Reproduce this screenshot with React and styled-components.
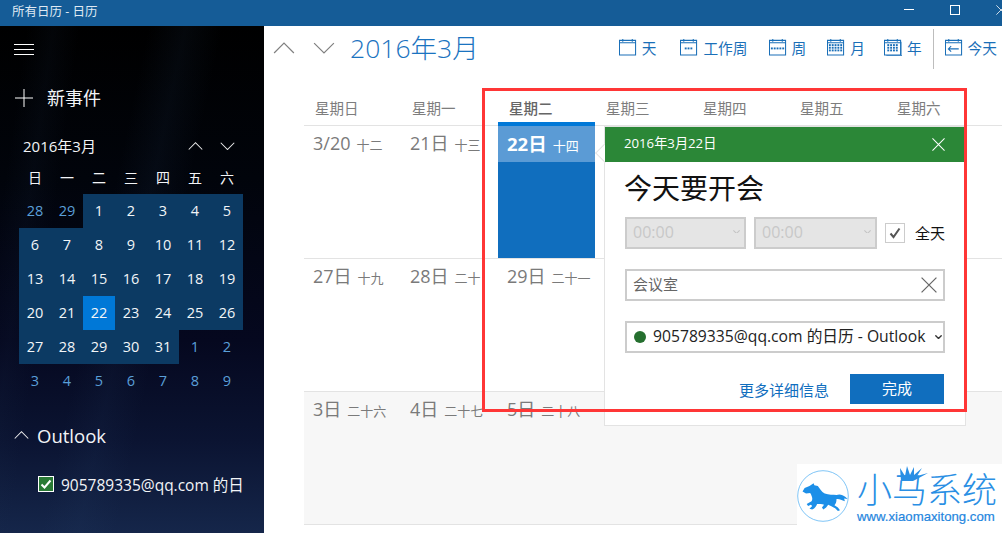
import React from "react";
import styled, { createGlobalStyle } from "styled-components";

const GlobalStyle = createGlobalStyle`
  html, body {
    margin: 0;
    padding: 0;
    background: #fff;
  }
  * {
    box-sizing: border-box;
  }
`;

const FONT = `"Open Sans", "Noto Sans CJK SC", sans-serif`;

const Page = styled.div`
  position: relative;
  width: 1002px;
  height: 533px;
  overflow: hidden;
  font-family: ${FONT};
  background: #fff;
`;

const TitleBar = styled.div`
  height: 26px;
  background: #155c97;
  display: flex;
  align-items: center;
  justify-content: space-between;
  padding: 0 0 6px 12px;
  color: #dfe9f3;
  font-size: 12.5px;
  overflow: hidden;
`;

const WindowButtons = styled.div`
  display: flex;
  align-items: center;
  width: 104px;
  gap: 36px;
  flex: none;
  margin-right: -6px;
  svg {
    flex: none;
    display: block;
  }
`;

const Body = styled.div`
  display: flex;
  height: 507px;
`;

const Sidebar = styled.aside`
  width: 264px;
  flex: none;
  color: #f2f4f7;
  overflow: hidden;
  padding-top: 18px;
  background:
    linear-gradient(102deg, transparent 40%, rgba(40, 70, 110, 0.1) 50%, transparent 60%),
    linear-gradient(98deg, transparent 8%, rgba(30, 50, 80, 0.1) 16%, transparent 24%),
    linear-gradient(180deg, #000 0%, #01040b 30%, #05081f 62%, #0b1432 82%, #15264a 100%);
`;

const MenuButton = styled.div`
  padding-left: 14px;
  height: 20px;
  display: flex;
  flex-direction: column;
  gap: 4px;
  span {
    display: block;
    width: 20px;
    height: 1px;
    background: #fff;
  }
`;

const NewEvent = styled.div`
  display: flex;
  align-items: center;
  gap: 14px;
  margin-top: 20px;
  padding-left: 15px;
  height: 28px;
  font-size: 18px;
  line-height: 28px;
`;

const MonthRow = styled.div`
  display: flex;
  align-items: center;
  justify-content: space-between;
  margin-top: 23px;
  padding: 0 29px 0 23px;
  height: 22px;
  font-size: 15px;
  span {
    margin-top: -2px;
  }
`;

const MonthArrows = styled.div`
  display: flex;
  gap: 17px;
  svg {
    display: block;
  }
`;

const MiniCalendar = styled.div`
  display: grid;
  grid-template-columns: repeat(7, 32px);
  margin: 10px 0 0 19px;
`;

const MiniHead = styled.div`
  height: 27px;
  font-size: 14px;
  line-height: 21px;
  text-align: center;
`;

const MiniDay = styled.div`
  height: 34px;
  line-height: 34px;
  text-align: center;
  font-size: 14.5px;
  color: ${(p) => (p.$inMonth ? "#f2f5f8" : "#5a9fd8")};
  background: ${(p) => (p.$selected ? "#0078d7" : p.$inMonth ? "#0c3a63" : "transparent")};
`;

const AccountHead = styled.div`
  display: flex;
  align-items: center;
  gap: 8px;
  margin-top: 23px;
  padding-left: 14px;
  height: 28px;
  font-size: 18.5px;
`;

const AccountRow = styled.div`
  display: flex;
  align-items: center;
  gap: 7px;
  margin-top: 25px;
  padding-left: 38px;
  height: 20px;
  font-size: 15.5px;
  white-space: nowrap;
`;

const GreenCheck = styled.span`
  flex: none;
  width: 16px;
  height: 16px;
  display: flex;
  align-items: center;
  justify-content: center;
  background: #2a7a35;
  border: 1px solid #fff;
`;

const Main = styled.main`
  flex: 1;
  min-width: 0;
  display: flex;
  flex-direction: column;
`;

const Header = styled.header`
  height: 44px;
  display: flex;
  align-items: center;
  justify-content: space-between;
  flex: none;
`;

const HeaderLeft = styled.div`
  display: flex;
  align-items: center;
  padding-left: 9px;
  svg {
    display: block;
  }
`;

const ArrowGap = styled.div`
  display: flex;
  gap: 18px;
  margin-right: 15px;
`;

const MonthTitle = styled.div`
  font-size: 26.5px;
  font-weight: 300;
  color: #1a73c0;
  line-height: 44px;
`;

const Toolbar = styled.div`
  display: flex;
  align-items: center;
  gap: 21px;
  padding-right: 5px;
`;

const ToolItem = styled.div`
  display: flex;
  align-items: center;
  gap: 5px;
  font-size: 14.7px;
  color: #1a6fb8;
  white-space: nowrap;
  padding-bottom: 2px;
  margin-right: ${(p) => p.$after || 0}px;
  svg {
    display: block;
  }
`;

const ToolDivider = styled.div`
  width: 1px;
  height: 40px;
  background: #bdbdbd;
  margin: 2px -10px 0;
`;

const Grid = styled.section`
  margin-top: 19px;
  padding-left: 40px;
  flex: 1;
  min-height: 0;
  display: flex;
  flex-direction: column;
`;

const WeekRow = styled.div`
  display: grid;
  grid-template-columns: repeat(7, 97px);
  height: 37px;
  padding-top: 4px;
  flex: none;
  border-bottom: 1px solid #e3e3e3;
`;

const WeekName = styled.div`
  padding-left: 11px;
  font-size: 14.5px;
  line-height: 31px;
  color: ${(p) => (p.$active ? "#666" : "#7d7d7d")};
  font-weight: ${(p) => (p.$active ? 500 : 400)};
`;

const CalRow = styled.div`
  display: grid;
  grid-template-columns: repeat(7, 97px);
  height: 133px;
  flex: none;
  border-bottom: 1px solid #e3e3e3;
  background: ${(p) => (p.$grey ? "#f7f7f7" : "#fff")};
`;

const Cell = styled.div`
  position: relative;
  padding: 4px 0 0 9px;
  color: #7a7a7a;
  font-size: 18px;
  line-height: 27px;
  white-space: nowrap;
  height: 132px;
  overflow: hidden;
  small {
    font-size: 13px;
    margin-left: 6px;
  }
`;

const TodayCell = styled.div`
  position: relative;
  height: 132px;
  width: 97px;
  background: #106ebe;
  color: #fff;
  &::before {
    content: "";
    position: absolute;
    left: 0;
    right: 0;
    top: -4px;
    height: 4px;
    background: #0078d7;
  }
`;

const TodayBand = styled.div`
  height: 36px;
  background: #5b9bd5;
  padding-left: 9px;
  font-size: 18.5px;
  font-weight: 700;
  line-height: 36px;
  white-space: nowrap;
  small {
    font-size: 13px;
    font-weight: 400;
    margin-left: 6px;
  }
`;

const Popup = styled.div`
  position: absolute;
  left: 604px;
  top: 126px;
  width: 362px;
  height: 300px;
  background: #fff;
  border: 1px solid #e3e3e3;
  z-index: 2;
  &::before {
    content: "";
    position: absolute;
    left: -7px;
    top: 19px;
    width: 13px;
    height: 13px;
    background: #fff;
    border-left: 1px solid #e3e3e3;
    border-bottom: 1px solid #e3e3e3;
    transform: rotate(45deg);
  }
`;

const PopupHead = styled.div`
  position: relative;
  height: 35px;
  background: #2b8737;
  color: #fff;
  display: flex;
  align-items: center;
  justify-content: space-between;
  padding: 0 20px 0 19px;
  font-size: 13.2px;
  svg {
    display: block;
  }
  span {
    padding-bottom: 4px;
  }
`;

const PopupBody = styled.div`
  padding: 0 20px;
`;

const EventTitle = styled.div`
  font-size: 28px;
  line-height: 40px;
  margin-top: 6px;
  margin-left: -1px;
  color: #111;
`;

const TimeRow = styled.div`
  display: flex;
  align-items: center;
  margin-top: 9px;
  height: 32px;
`;

const TimeSelect = styled.div`
  width: ${(p) => p.$width}px;
  height: 32px;
  margin-right: 8px;
  background: #e5e5e5;
  border: 2px solid #ccc;
  color: #c8c8c8;
  font-size: 16px;
  display: flex;
  align-items: center;
  justify-content: space-between;
  padding: 0 4px 3px 6px;
`;

const CheckBox = styled.div`
  width: 20px;
  height: 20px;
  border: 1px solid #ccc;
  display: flex;
  align-items: center;
  justify-content: center;
  margin-right: 10px;
`;

const AllDay = styled.span`
  font-size: 15px;
  color: #111;
  margin-top: -2px;
`;

const Field = styled.div`
  width: 320px;
  height: 32px;
  margin-top: 20px;
  border: 2px solid #ccc;
  display: flex;
  align-items: center;
  justify-content: space-between;
  padding: 0 6px;
  font-size: 15px;
  color: #666;
  span {
    margin-top: -3px;
  }
  svg {
    display: block;
  }
`;

const CalendarField = styled(Field)`
  font-size: 15.7px;
  color: #222;
  padding: 0 1px 0 7px;
  white-space: nowrap;
`;

const FieldLabel = styled.div`
  display: flex;
  align-items: center;
  gap: 7px;
`;

const Dot = styled.i`
  width: 12px;
  height: 12px;
  border-radius: 50%;
  background: #256f2f;
`;

const Actions = styled.div`
  display: flex;
  align-items: center;
  justify-content: flex-end;
  gap: 21px;
  width: 319px;
  margin-top: 21px;
`;

const MoreLink = styled.span`
  color: #106ebe;
  font-size: 15px;
`;

const DoneButton = styled.div`
  width: 94px;
  height: 30px;
  background: #106ebe;
  color: #fff;
  font-size: 15px;
  line-height: 28px;
  text-align: center;
`;

const RedFrame = styled.div`
  position: absolute;
  left: 482px;
  top: 88px;
  width: 485px;
  height: 324px;
  border: 3px solid #ff3636;
  z-index: 3;
  pointer-events: none;
`;

const Logo = styled.div`
  position: absolute;
  right: 0;
  top: 464px;
  width: 205px;
  height: 64px;
  background: #fff;
  z-index: 4;
  display: flex;
  align-items: center;
  gap: 8px;
  svg {
    display: block;
    flex: none;
  }
`;

const LogoText = styled.div`
  position: relative;
  color: #2a8fe4;
  display: flex;
  flex-direction: column;
`;

const LogoName = styled.div`
  font-size: 35px;
  line-height: 38px;
  font-weight: 300;
  white-space: nowrap;
  margin-top: 3px;
`;

const LogoUrl = styled.div`
  font-family: "Liberation Sans", sans-serif;
  font-size: 13.2px;
  line-height: 15px;
  white-space: nowrap;
  color: #1f86de;
  -webkit-text-stroke: 0.2px #1f86de;
`;

const Mane = styled.svg`
  position: absolute;
  left: 42px;
  top: -3px;
`;

const Chevron = ({ up, size = 15, color = "#eee", stroke }) => (
  <svg width={size} height={size * 0.55} viewBox="0 0 20 11" fill="none">
    <path
      d={up ? "M1 10 L10 1 L19 10" : "M1 1 L10 10 L19 1"}
      stroke={color}
      strokeWidth={stroke || (size > 18 ? 1.1 : 1.4)}
    />
  </svg>
);

const Cross = ({ size = 14, color = "#fff" }) => (
  <svg width={size} height={size} viewBox="0 0 14 14" fill="none">
    <path d="M0.5 0.5 L13.5 13.5 M13.5 0.5 L0.5 13.5" stroke={color} strokeWidth="1.1" />
  </svg>
);

// calendar icons for the toolbar, dots = cells of the small grid
const CalIcon = ({ rows = 0, cols = 0, stack, arrow }) => {
  const dots = [];
  const startX = 9.5 - (cols * 3 - 1) / 2;
  for (let r = 0; r < rows; r++) {
    for (let c = 0; c < cols; c++) {
      dots.push(
        <rect
          key={`${r}-${c}`}
          x={startX + c * 3}
          y={(rows === 1 ? 11 : 7.5) + r * 2.8}
          width="2"
          height="2"
          fill="#1a6fb8"
        />
      );
    }
  }
  return (
    <svg width="18" height="18" viewBox="0.5 1 19 19" fill="none">
      <path d="M1 3.5 H18 V19 H1 Z M1 6 H18 M4.5 2 V5 M14.5 2 V5" stroke="#1a6fb8" strokeWidth="1.1" />
      {dots}
      {stack && <path d="M19.5 5 V19.8 H3" stroke="#1a6fb8" strokeWidth="1" />}
      {arrow && (
        <path d="M15 12.5 H4 M7 9.5 L4 12.5 L7 15.5" stroke="#1a6fb8" strokeWidth="1.1" />
      )}
    </svg>
  );
};

const HorseLogo = () => (
  <svg width="52" height="52" viewBox="0 0 150 150">
    <circle cx="75" cy="75" r="73" fill="#fff" stroke="#6cbcf5" strokeWidth="2.5" />
    <path
      d="M16 62 L22 52 L36 46 L48 38 L50 44 L60 46 C66 54 70 62 80 68 C92 72 104 72 114 72 C124 68 132 72 140 78 L146 84 L136 82 L138 90 C128 86 120 82 114 84 C114 92 112 98 108 102 L118 108 L124 116 L118 118 L110 110 C102 106 96 102 90 100 L84 108 L76 114 L72 108 L78 100 C72 98 64 98 58 98 C56 104 52 110 44 114 L36 112 L44 104 L40 100 L32 104 L28 98 L42 90 C46 84 44 76 38 66 L26 68 Z"
      fill="#1c8fe8"
    />
  </svg>
);

const miniDays = [
  [28, 0], [29, 0], [1, 1], [2, 1], [3, 1], [4, 1], [5, 1],
  [6, 1], [7, 1], [8, 1], [9, 1], [10, 1], [11, 1], [12, 1],
  [13, 1], [14, 1], [15, 1], [16, 1], [17, 1], [18, 1], [19, 1],
  [20, 1], [21, 1], [22, 1], [23, 1], [24, 1], [25, 1], [26, 1],
  [27, 1], [28, 1], [29, 1], [30, 1], [31, 1], [1, 0], [2, 0],
  [3, 0], [4, 0], [5, 0], [6, 0], [7, 0], [8, 0], [9, 0],
];

const weekNames = ["星期日", "星期一", "星期二", "星期三", "星期四", "星期五", "星期六"];

const rows = [
  [["3/20", "十二"], ["21日", "十三"], null],
  [["27日", "十九"], ["28日", "二十"], ["29日", "二十一"]],
  [["3日", "二十六"], ["4日", "二十七"], ["5日", "二十八"]],
];

export default function App() {
  return (
    <Page>
      <GlobalStyle />
      <TitleBar>
        <span>所有日历 - 日历</span>
        <WindowButtons>
          <svg width="10" height="2" viewBox="0 0 10 2"><rect width="10" height="1" fill="#fff" /></svg>
          <svg width="10" height="10" viewBox="0 0 10 10" fill="none"><rect x="0.5" y="0.5" width="9" height="9" stroke="#fff" /></svg>
          <Cross size={10} />
        </WindowButtons>
      </TitleBar>
      <Body>
        <Sidebar>
          <MenuButton>
            <span />
            <span />
            <span />
          </MenuButton>
          <NewEvent>
            <svg width="18" height="18" viewBox="0 0 18 18"><path d="M9 0 V18 M0 9 H18" stroke="#fff" strokeWidth="1" /></svg>
            新事件
          </NewEvent>
          <MonthRow>
            <span>2016年3月</span>
            <MonthArrows>
              <Chevron up />
              <Chevron />
            </MonthArrows>
          </MonthRow>
          <MiniCalendar>
            {["日", "一", "二", "三", "四", "五", "六"].map((d) => (
              <MiniHead key={d}>{d}</MiniHead>
            ))}
            {miniDays.map(([d, inMonth], i) => (
              <MiniDay key={i} $inMonth={!!inMonth} $selected={i === 23}>
                {d}
              </MiniDay>
            ))}
          </MiniCalendar>
          <AccountHead>
            <Chevron up />
            Outlook
          </AccountHead>
          <AccountRow>
            <GreenCheck>
              <svg width="12" height="12" viewBox="0 0 12 12" fill="none">
                <path d="M1.5 6.5 L4.5 9.5 L10.5 2.5" stroke="#fff" strokeWidth="2" />
              </svg>
            </GreenCheck>
            905789335@qq.com 的日
          </AccountRow>
        </Sidebar>
        <Main>
          <Header>
            <HeaderLeft>
              <ArrowGap>
                <Chevron up size={22} color="#808080" />
                <Chevron size={22} color="#808080" />
              </ArrowGap>
              <MonthTitle>2016年3月</MonthTitle>
            </HeaderLeft>
            <Toolbar>
              <ToolItem $after={3}><CalIcon />天</ToolItem>
              <ToolItem><CalIcon rows={1} cols={3} />工作周</ToolItem>
              <ToolItem><CalIcon rows={1} cols={5} />周</ToolItem>
              <ToolItem $after={-2}><CalIcon rows={3} cols={5} />月</ToolItem>
              <ToolItem><CalIcon rows={3} cols={4} stack />年</ToolItem>
              <ToolDivider />
              <ToolItem><CalIcon arrow />今天</ToolItem>
            </Toolbar>
          </Header>
          <Grid>
            <WeekRow>
              {weekNames.map((name, i) => (
                <WeekName key={name} $active={i === 2}>
                  {name}
                </WeekName>
              ))}
            </WeekRow>
            {rows.map((row, r) => (
              <CalRow key={r} $grey={r === 2}>
                {row.map((cell, c) =>
                  cell ? (
                    <Cell key={c}>
                      {cell[0]}
                      <small>{cell[1]}</small>
                    </Cell>
                  ) : (
                    <TodayCell key={c}>
                      <TodayBand>
                        22日<small>十四</small>
                      </TodayBand>
                    </TodayCell>
                  )
                )}
              </CalRow>
            ))}
          </Grid>
        </Main>
      </Body>

      <Popup>
        <PopupHead>
          <span>2016年3月22日</span>
          <Cross size={13} />
        </PopupHead>
        <PopupBody>
          <EventTitle>今天要开会</EventTitle>
          <TimeRow>
            <TimeSelect $width={121}>
              00:00
              <Chevron size={7} color="#c4c4c4" stroke={3} />
            </TimeSelect>
            <TimeSelect $width={123}>
              00:00
              <Chevron size={7} color="#c4c4c4" stroke={3} />
            </TimeSelect>
            <CheckBox>
              <svg width="12" height="12" viewBox="0 0 12 12" fill="none">
                <path d="M1.5 6.5 L4.5 10 L10.5 1.5" stroke="#555" strokeWidth="2" />
              </svg>
            </CheckBox>
            <AllDay>全天</AllDay>
          </TimeRow>
          <Field>
            <span>会议室</span>
            <Cross size={16} color="#666" />
          </Field>
          <CalendarField>
            <FieldLabel>
              <Dot />
              <span>905789335@qq.com 的日历 - Outlook</span>
            </FieldLabel>
            <Chevron size={7} color="#333" stroke={4} />
          </CalendarField>
          <Actions>
            <MoreLink>更多详细信息</MoreLink>
            <DoneButton>完成</DoneButton>
          </Actions>
        </PopupBody>
      </Popup>

      <RedFrame />

      <Logo>
        <HorseLogo />
        <LogoText>
          <Mane width="30" height="16" viewBox="0 0 30 16" fill="none">
            <path d="M2 16 L1 3 L6 11 L8 1 L11 10 L15 2 L15 10 L23 3 L18 11 L29 8 L18 14 L14 16 Z" fill="#2a8fe4" />
          </Mane>
          <LogoName>小马系统</LogoName>
          <LogoUrl>www.xiaomaxitong.com</LogoUrl>
        </LogoText>
      </Logo>
    </Page>
  );
}
